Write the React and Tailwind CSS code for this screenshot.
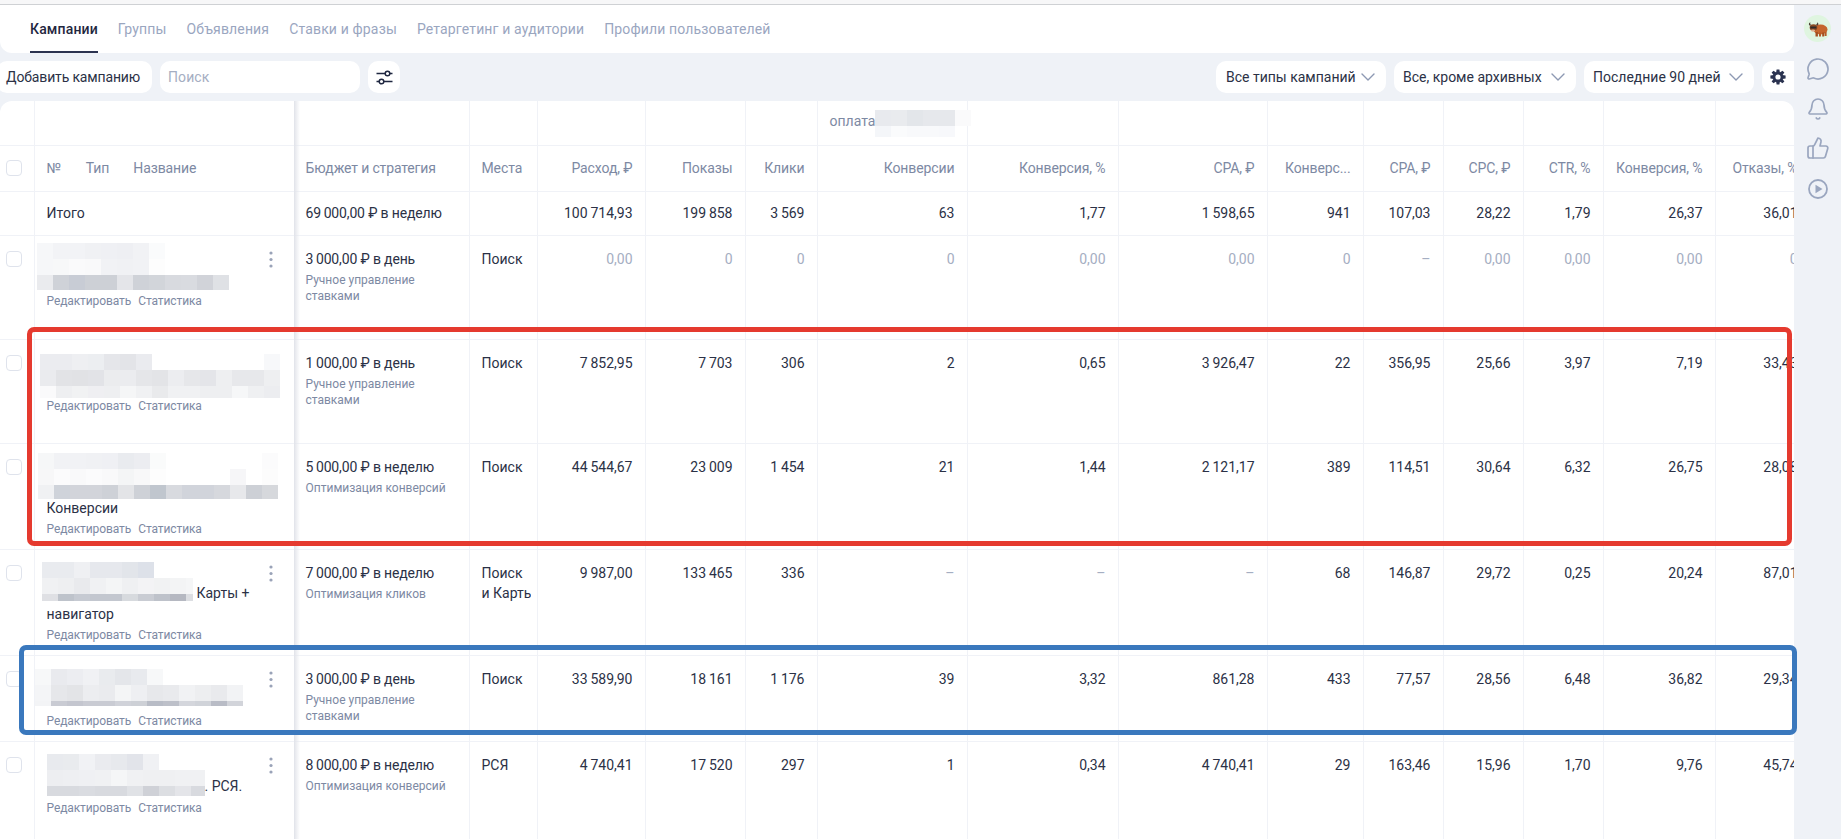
import React from "react";
import { MessageCircle, Bell, ThumbsUp } from "lucide-react";

const thin = (s) => s.replace(/(\d) (\d)/g, "$1\u2009$2");

function Mosaic({ rows, width, className = "" }) {
  const height = rows.reduce((a, r) => a + r[0], 0);
  let y = 0;
  const rects = [];
  rows.forEach((r, i) => {
    r[1].split(" ").forEach((c, j) => {
      if (c !== "-") rects.push(<rect key={i + "-" + j} x={j * 16} y={y} width="16" height={r[0]} fill={"#" + c} />);
    });
    y += r[0];
  });
  return (
    <svg width={width} height={height} viewBox={`0 0 ${width} ${height}`} shapeRendering="crispEdges" className={"block shrink-0 " + className}>
      {rects}
    </svg>
  );
}

const M1 = [
  [16, "f6f7f9 f2f3f6 f2f3f6 f0f1f4 eff0f4 eeeff3 f1f2f5 fafbfc"],
  [16, "f6f7f9 f7f8f9 fafafb f9f9fa f1f2f5 f0f1f4 f1f2f5 fdfdfd"],
  [15, "eaebee cfd2d8 c8ccd5 cdd0d6 cdd0d6 e4e5e9 cfd2d8 d2d5da d8dadf d9dbe0 d1d3d9 dfe1e5"],
];
const M2 = [
  [16, "ebecf0 ebecf0 eeeff2 eceef1 e5e6ea e3e4e8 eaebef - - - - - - - f7f8fa"],
  [16, "eaebee e2e3e6 e1e2e5 e2e3e7 ebecee ebecef e5e6e9 e3e4e7 ecedf0 e6e7ea e4e5e9 eeeff1 e7e8eb e7e8eb eeeff1"],
  [12, "fafafb eeeff1 f1f2f3 efeff2 eeeff1 f5f6f7 f0f1f3 e9eaec f0f1f3 f0f1f3 eeeff1 eeeff1 f6f7f8 eff0f2 ecedf0"],
];
const M3 = [
  [16, "f6f7f8 f1f2f5 f1f2f5 f0f1f4 eff0f4 e9ebef ecedf1 fafbfb - - - - - - fbfbfc"],
  [16, "f7f7f8 fbfbfc f9f9fa fbfbfc f9f9fa f4f5f6 f8f8f9 fdfdfd - - - - f6f6f8 - fcfcfc"],
  [14, "f0f1f3 cfd3da d2d4da d2d4da ced1d7 e3e4e7 ced1d7 c0c6ce d8dadf d1d4db d1d4db d6d8dd e7e8eb cdd0d6 d6d8dc"],
];
const M4 = [
  [16, "e9ebef e9ebef eff0f3 e6e8ed e6e8ed e2e5ea dde1e9"],
  [16, "f0f1f3 eeeff1 e9eaed f0f1f3 f4f5f6 eff0f2 f3f3f5 f1f2f3 f3f4f5 f5f6f7"],
  [7, "dfe0e4 bec3cb c6cad2 c3c7cf c3c7cf d7dade c9ccd3 bec2ca b5b8c1 dcdee2"],
];
const M5 = [
  [16, "f7f8f9 e9eaee ecedf1 f0f1f4 e9ebee e4e6ea e8eaee f7f8f9"],
  [16, "f4f5f7 e6e7ea e3e4e7 ecedf0 eaebee f4f5f6 eeeff2 e7e8eb e9eaed f1f2f4 edeef0 e9eaed f2f3f5"],
  [5, "f3f4f6 c9cbd3 c4c6cf c9cbd3 c9cbd3 d0d2d9 cdd0d6 b8bcc6 bdc0c9 d4d6dc d0d3d9 b9bcc6 d2d4da"],
];
const M6 = [
  [16, "e8eaee e9ebee f1f2f5 eaebef e7e9ed e2e4ea f0f1f4"],
  [16, "edeef1 eeeff2 eff0f3 f0f1f3 f5f6f7 f0f1f3 eff0f2 eff0f2 f0f1f3 f0f1f3"],
  [10, "d8dadf d8dadf dadce1 d8dadf d8dadf e0e2e6 cfd1d7 dcdee2 e4e5e9 d8dadf"],
];
const MO = [
  [16, "e8eaee e9ebee e3e6ea e6e8ec e6e8ec fafafb"],
  [11, "f4f6f9 fafbfc f8f9fb f8f9fb f7f8fb"],
];

const cols = [
  "w-[34px]", "w-[260px]", "w-[175px]", "w-[68px]", "w-[108px]", "w-[100px]", "w-[72px]", "w-[150px]",
  "w-[151px]", "w-[149px]", "w-[96px]", "w-[80px]", "w-[80px]", "w-[80px]", "w-[112px]", "w-[95px]",
];

const B = "border-b border-r border-[#f0f2f7]";

function Check() {
  return <div className="w-4 h-4 rounded-[4px] border border-[#dfe3ec] bg-white" />;
}

function Kebab() {
  return (
    <svg width="4" height="17" viewBox="0 0 4 17" className="absolute right-[21px] top-[15px]">
      <circle cx="2" cy="2" r="1.6" fill="#9aa3b8" />
      <circle cx="2" cy="8.5" r="1.6" fill="#9aa3b8" />
      <circle cx="2" cy="15" r="1.6" fill="#9aa3b8" />
    </svg>
  );
}

function Links() {
  return (
    <div className="flex gap-[7px] pl-3 text-[12px] leading-[16px] tracking-[-0.1px] text-[#7d89a3]">
      <span>Редактировать</span>
      <span>Статистика</span>
    </div>
  );
}

const rowsData = [
  {
    h: "h-[104px]",
    kebab: true,
    budget: "3 000,00 ₽ в день",
    strat: "Ручное управление ставками",
    place: "Поиск",
    muted: true,
    vals: ["0,00", "0", "0", "0", "0,00", "0,00", "0", "–", "0,00", "0,00", "0,00", "0"],
    name: (
      <div className="pt-[7px]">
        <Mosaic rows={M1} width={192} className="ml-[2px]" />
        <div className="mt-[3px]"><Links /></div>
      </div>
    ),
  },
  {
    h: "h-[104px]",
    budget: "1 000,00 ₽ в день",
    strat: "Ручное управление ставками",
    place: "Поиск",
    vals: ["7 852,95", "7 703", "306", "2", "0,65", "3 926,47", "22", "356,95", "25,66", "3,97", "7,19", "33,43"],
    name: (
      <div className="pt-[14px]">
        <Mosaic rows={M2} width={240} className="ml-[5px]" />
        <div className="mt-[0px]"><Links /></div>
      </div>
    ),
  },
  {
    h: "h-[106px]",
    budget: "5 000,00 ₽ в неделю",
    strat: "Оптимизация конверсий",
    place: "Поиск",
    vals: ["44 544,67", "23 009", "1 454", "21", "1,44", "2 121,17", "389", "114,51", "30,64", "6,32", "26,75", "28,08"],
    name: (
      <div className="pt-[9px]">
        <Mosaic rows={M3} width={240} className="ml-[3px]" />
        <div className="pl-3 text-[14px] leading-[20px] mt-[-1px] text-[#2b3146]">Конверсии</div>
        <div className="mt-[3px]"><Links /></div>
      </div>
    ),
  },
  {
    h: "h-[106px]",
    kebab: true,
    budget: "7 000,00 ₽ в неделю",
    strat: "Оптимизация кликов",
    place: "Поиск и Карты",
    vals: ["9 987,00", "133 465", "336", "–", "–", "–", "68", "146,87", "29,72", "0,25", "20,24", "87,01"],
    dashes: true,
    name: (
      <div className="pt-[12px]">
        <div className="flex items-end">
          <Mosaic rows={M4} width={151} className="ml-[7px]" />
          <span className="ml-[4px] text-[14px] leading-[20px] mb-[-2px] text-[#2b3146]">Карты +</span>
        </div>
        <div className="pl-3 text-[14px] leading-[20px] mt-[3px] text-[#2b3146]">навигатор</div>
        <div className="mt-[3px]"><Links /></div>
      </div>
    ),
  },
  {
    h: "h-[86px]",
    kebab: true,
    budget: "3 000,00 ₽ в день",
    strat: "Ручное управление ставками",
    place: "Поиск",
    vals: ["33 589,90", "18 161", "1 176", "39", "3,32", "861,28", "433", "77,57", "28,56", "6,48", "36,82", "29,34"],
    name: (
      <div className="pt-[13px]">
        <Mosaic rows={M5} width={208} />
        <div className="mt-[7px]"><Links /></div>
      </div>
    ),
  },
  {
    h: "h-[98px]",
    kebab: true,
    budget: "8 000,00 ₽ в неделю",
    strat: "Оптимизация конверсий",
    place: "РСЯ",
    vals: ["4 740,41", "17 520", "297", "1", "0,34", "4 740,41", "29", "163,46", "15,96", "1,70", "9,76", "45,74"],
    name: (
      <div className="pt-[12px]">
        <div className="flex items-end">
          <Mosaic rows={M6} width={158} className="ml-[12px]" />
          <span className="text-[14px] leading-[20px] text-[#2b3146]">. РСЯ.</span>
        </div>
        <div className="mt-[4px]"><Links /></div>
      </div>
    ),
  },
];

const heads = ["Расход, ₽", "Показы", "Клики", "Конверсии", "Конверсия, %", "CPA, ₽", "Конверс...", "CPA, ₽", "CPC, ₽", "CTR, %", "Конверсия, %", "Отказы, %"];
const totals = ["100 714,93", "199 858", "3 569", "63", "1,77", "1 598,65", "941", "107,03", "28,22", "1,79", "26,37", "36,01"];

function Chevron() {
  return (
    <svg width="14" height="8" viewBox="0 0 14 8" fill="none" className="shrink-0">
      <path d="M1 1l6 6 6-6" stroke="#8d99b3" strokeWidth="1.4" strokeLinecap="round" strokeLinejoin="round" />
    </svg>
  );
}

function Select({ label, className }) {
  return (
    <div className={"h-8 bg-white rounded-[10px] flex items-center justify-between pl-[9px] pr-[11px] text-[14px] text-[#2b3146] " + className}>
      <span className="whitespace-nowrap">{label}</span>
      <Chevron />
    </div>
  );
}

function Gear() {
  const teeth = [0, 45, 90, 135, 180, 225, 270, 315];
  return (
    <svg width="16" height="16" viewBox="0 0 16 16">
      {teeth.map((a) => (
        <path key={a} d="M6.6 0.4h2.8l0.5 3.4H6.1z" fill="#2b3350" transform={`rotate(${a} 8 8)`} />
      ))}
      <circle cx="8" cy="8" r="3.9" fill="none" stroke="#2b3350" strokeWidth="2.6" />
    </svg>
  );
}

function Yak() {
  return (
    <svg width="20" height="16" viewBox="0 0 20 16">
      <ellipse cx="12.5" cy="8.5" rx="7" ry="5" fill="#c5652c" />
      <rect x="7.5" y="11" width="2.4" height="4.5" fill="#a34e1f" />
      <rect x="11" y="11.5" width="2" height="4" fill="#b65a25" />
      <rect x="14.2" y="11.5" width="2" height="4" fill="#a34e1f" />
      <rect x="16.6" y="11" width="2" height="4" fill="#b65a25" />
      <ellipse cx="5.5" cy="6.5" rx="3.8" ry="3.2" fill="#8a4a22" />
      <rect x="2.4" y="5.5" width="6" height="2" fill="#2e2a28" />
      <path d="M1.2 4.5C0.4 2.6 1.2 1.6 2.4 1.2 1.8 2.6 2.6 3.6 3.4 4zM9.8 4.5C10.8 3.4 10.4 2 9.4 1.2 9.4 2.4 8.6 3.4 7.8 4z" fill="#4d4038" />
      <ellipse cx="5" cy="9.6" rx="2.2" ry="1.1" fill="#e0b090" />
    </svg>
  );
}

function PlayCircle() {
  return (
    <svg width="24" height="24" viewBox="0 0 24 24" fill="none" className="mt-[17px]">
      <circle cx="12" cy="12" r="9" stroke="currentColor" strokeWidth="1.8" />
      <path d="M9.5 7.8l7 4.2-7 4.2z" fill="currentColor" />
    </svg>
  );
}

export default function App() {
  return (
    <div className="relative w-[1841px] h-[839px] overflow-hidden bg-[#eff2f7] [font-family:Roboto,sans-serif] text-[14px] text-[#2b3146]">
      <div className="h-[5px] bg-[#f7f7f8] border-b border-[#cfd1d4]" />
      <div className="flex h-[834px]">
        <div className="w-[1794px] shrink-0 flex flex-col min-h-0">
          {/* tabs */}
          <div className="h-[48px] shrink-0 bg-white rounded-b-[12px] flex gap-[20px] pl-[30px] text-[14px]">
            <div className="relative pt-[14px] text-[#1f2740] font-medium tracking-[0.15px]">
              Кампании
              <div className="absolute left-0 right-0 bottom-0 h-[2px] bg-[#2c3350]" />
            </div>
            {["Группы", "Объявления", "Ставки и фразы", "Ретаргетинг и аудитории", "Профили пользователей"].map((t) => (
              <div key={t} className="pt-[14px] text-[#9aa6bf] tracking-[0.15px]">{t}</div>
            ))}
          </div>
          {/* toolbar */}
          <div className="h-[32px] shrink-0 mt-[8px] flex items-center">
            <div className="h-8 w-[155px] -ml-[3px] pl-[9px] bg-white rounded-[10px] flex items-center whitespace-nowrap tracking-[-0.15px]">Добавить кампанию</div>
            <div className="h-8 w-[200px] ml-[8px] pl-[8px] bg-white rounded-[10px] flex items-center text-[#a5aec2] tracking-[0.1px]">Поиск</div>
            <div className="h-8 w-[32px] ml-[8px] bg-white rounded-[10px] flex items-center justify-center">
              <svg width="17" height="15" viewBox="0 0 17 15" fill="none" stroke="#1f2740" strokeWidth="1.5">
                <path d="M0.5 3.5H9M14 3.5h2.5M0.5 11.5H3M8 11.5h8.5" />
                <circle cx="11.5" cy="3.5" r="2.3" />
                <circle cx="5.5" cy="11.5" r="2.3" />
              </svg>
            </div>
            <div className="flex-1" />
            <Select label="Все типы кампаний" className="w-[170px] pl-[10px]" />
            <Select label="Все, кроме архивных" className="w-[182px] ml-[8px]" />
            <Select label="Последние 90 дней" className="w-[170px] ml-[8px]" />
            <div className="h-8 w-[32px] ml-[8px] bg-white rounded-l-[10px] flex items-center justify-center">
              <Gear />
            </div>
          </div>
          {/* table */}
          <div className="relative mt-[8px] flex-1 min-h-0 bg-white rounded-t-[12px] overflow-hidden">
            <table className="table-fixed border-collapse w-[1810px] text-[14px] leading-[20px]">
              <colgroup>
                {cols.map((c, i) => (
                  <col key={i} className={c} />
                ))}
              </colgroup>
              <tbody>
                <tr className="h-[44px]">
                  {cols.map((c, i) => (
                    <td key={i} className={B + " px-3 align-middle"}>
                      {i === 7 && (
                        <div className="flex items-start h-[27px] mt-[1px] text-[#7d89a3]">
                          <span className="pt-[1px]">оплата</span>
                          <Mosaic rows={MO} width={96} />
                        </div>
                      )}
                    </td>
                  ))}
                </tr>
                <tr className="h-[46px] text-[#7d89a3]">
                  <td className={B + " pl-[6px] align-middle"}><Check /></td>
                  <td className={B + " pl-3 align-middle"}>
                    <div className="flex tracking-[-0.1px]">
                      <span>№</span>
                      <span className="ml-[25px]">Тип</span>
                      <span className="ml-[24px]">Название</span>
                    </div>
                  </td>
                  <td className={B + " pl-[11px] align-middle tracking-[-0.15px]"}>Бюджет и стратегия</td>
                  <td className={B + " pl-3 align-middle tracking-[-0.1px]"}>Места</td>
                  {heads.map((h, i) => (
                    <td key={i} className={B + " pr-3 pl-0 text-right align-middle whitespace-nowrap tracking-[-0.1px]"}>{h}</td>
                  ))}
                </tr>
                <tr className="h-[44px]">
                  <td className={B} />
                  <td className={B + " pl-3 align-middle"}>Итого</td>
                  <td className={B + " pl-[11px] align-middle whitespace-nowrap tracking-[-0.15px]"}>{thin("69 000,00 ₽ в неделю")}</td>
                  <td className={B} />
                  {totals.map((v, i) => (
                    <td key={i} className={B + " pr-3 text-right align-middle whitespace-nowrap"}>{thin(v)}</td>
                  ))}
                </tr>
                {rowsData.map((r, ri) => (
                  <tr key={ri} className={r.h}>
                    <td className={B + " align-top pl-[6px] pt-[15px]"}><Check /></td>
                    <td className={B + " relative align-top p-0"}>
                      {r.name}
                      {r.kebab && <Kebab />}
                    </td>
                    <td className={B + " align-top pl-[11px] pr-3 pt-[13px]"}>
                      <div className="whitespace-nowrap tracking-[-0.15px]">{thin(r.budget)}</div>
                      <div className="mt-[3px] text-[12px] leading-[16px] text-[#7d89a3]">{r.strat}</div>
                    </td>
                    <td className={B + " align-top pl-3 pt-[13px]"}>
                      <div className="w-[49px] overflow-hidden">
                        {r.place === "Поиск и Карты" ? (
                          <>
                            <div>Поиск</div>
                            <div className="whitespace-nowrap">и Карты</div>
                          </>
                        ) : (
                          r.place
                        )}
                      </div>
                    </td>
                    {r.vals.map((v, i) => (
                      <td
                        key={i}
                        className={
                          B + " align-top pr-3 pt-[13px] text-right whitespace-nowrap " +
                          (r.muted || v === "–" ? "text-[#a5aec2]" : "")
                        }
                      >
                        {thin(v)}
                      </td>
                    ))}
                  </tr>
                ))}
              </tbody>
            </table>
            {/* sticky column shadow */}
            <div className="absolute left-[294px] top-0 bottom-0 w-[6px] bg-linear-to-r from-[#e2e4ea] to-transparent" />
          </div>
        </div>
        {/* sidebar */}
        <div className="flex-1 flex flex-col items-center text-[#9aa6bf]">
          <div className="mt-[10px] w-[27px] h-[27px] rounded-full bg-[#dff5e0] flex items-center justify-center"><Yak /></div>
          <MessageCircle size={24} strokeWidth={1.7} className="mt-[15px]" />
          <Bell size={24} strokeWidth={1.7} className="mt-[16px]" />
          <ThumbsUp size={24} strokeWidth={1.7} className="mt-[15px]" />
          <PlayCircle />
        </div>
      </div>
      {/* annotation frames */}
      <div className="absolute left-[27px] top-[327px] w-[1765px] h-[219px] rounded-[7px] border-[5px] border-[#e53a2f] pointer-events-none" />
      <div className="absolute left-[19px] top-[645px] w-[1778px] h-[90px] rounded-[7px] border-[5px] border-[#3a78bd] pointer-events-none" />
    </div>
  );
}
